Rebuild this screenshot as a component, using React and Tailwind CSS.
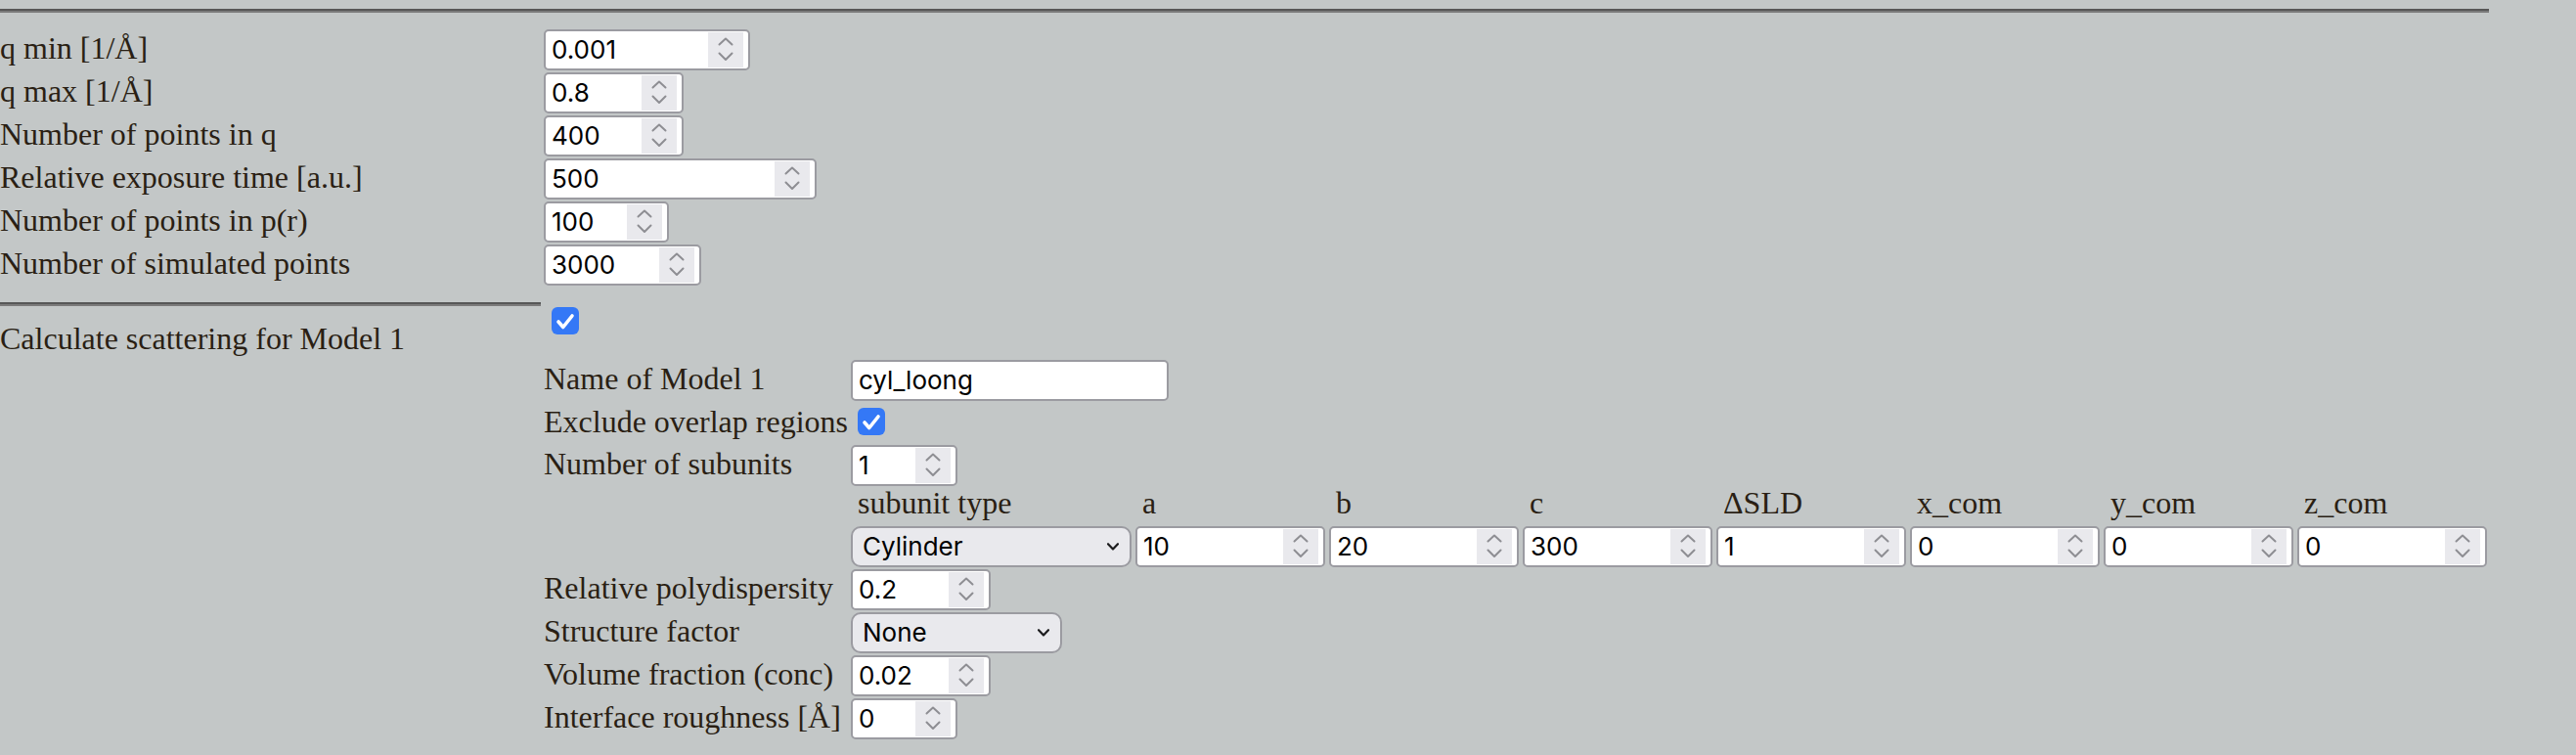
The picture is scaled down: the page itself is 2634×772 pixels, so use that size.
import React from "react";

const LABEL = "font-['Liberation_Serif',serif] text-[32px] leading-[38px] text-[#2a1f14] whitespace-nowrap";
const FIELD_TEXT = "font-['Inter',sans-serif] text-[26px] leading-none text-black";

function Spinner() {
  return (
    <div className="w-[36px] h-[36px] bg-[#e9e9ed] flex items-center justify-center shrink-0">
      <svg width="36" height="36" viewBox="0 0 36 36" fill="none">
        <polyline points="11.5,12.5 18,6.5 24.5,12.5" stroke="#8e8e93" strokeWidth="2" strokeLinecap="round" strokeLinejoin="round" />
        <polyline points="11.5,21.5 18,28 24.5,21.5" stroke="#8e8e93" strokeWidth="2" strokeLinecap="round" strokeLinejoin="round" />
      </svg>
    </div>
  );
}

function NumInput({ value, w }) {
  return (
    <div className={`flex items-center h-[42px] border-2 border-[#9b9ba1] rounded-[5px] bg-white pl-[6px] pr-[5px] ${w}`}>
      <span className={`flex-1 ${FIELD_TEXT}`}>{value}</span>
      <Spinner />
    </div>
  );
}

function Select({ value, w }) {
  return (
    <div className={`flex items-center h-[42px] border-2 border-[#9b9ba1] rounded-[10px] bg-[#e9e9ed] pl-[10px] pr-[11px] ${w}`}>
      <span className={`flex-1 ${FIELD_TEXT}`}>{value}</span>
      <svg width="12" height="8" viewBox="0 0 12 8" fill="none">
        <polyline points="1,1.2 6,6.5 11,1.2" stroke="#1c1c1e" strokeWidth="2.2" strokeLinecap="round" strokeLinejoin="round" />
      </svg>
    </div>
  );
}

function Checkbox({ className = "" }) {
  return (
    <div className={`w-[28px] h-[28px] rounded-[6px] bg-[#3478f6] flex items-center justify-center ${className}`}>
      <svg width="28" height="28" viewBox="0 0 28 28" fill="none">
        <polyline points="7,15 11.8,20.5 21,9" stroke="white" strokeWidth="3.6" strokeLinecap="round" strokeLinejoin="round" />
      </svg>
    </div>
  );
}

function Hr({ className = "" }) {
  return <div className={`h-0 border-t-2 border-b-2 border-t-[#575757] border-b-[#7a7a7a] ${className}`} />;
}

const topRows = [
  ["q min [1/Å]", "0.001", "w-[211px]"],
  ["q max [1/Å]", "0.8", "w-[143px]"],
  ["Number of points in q", "400", "w-[143px]"],
  ["Relative exposure time [a.u.]", "500", "w-[279px]"],
  ["Number of points in p(r)", "100", "w-[128px]"],
  ["Number of simulated points", "3000", "w-[161px]"],
];

const headers = ["subunit type", "a", "b", "c", "ΔSLD", "x_com", "y_com", "z_com"];
const values = ["10", "20", "300", "1", "0", "0", "0"];

export default function App() {
  return (
    <div className="min-h-screen w-full bg-[#c3c7c7] overflow-hidden">
      <Hr className="mt-[9px] w-[2545px]" />
      <div className="mt-[17px] grid grid-cols-[553px_max-content] gap-x-[3px] gap-y-[2px]">
        {topRows.map(([label, value, w]) => (
          <React.Fragment key={label}>
            <div className={LABEL}>{label}</div>
            <div className="flex">
              <NumInput value={value} w={w} />
            </div>
          </React.Fragment>
        ))}

        <div className="flex flex-col h-[72px]">
          <Hr className="mt-[15px] w-full" />
          <div className={`mt-[14px] ${LABEL}`}>Calculate scattering for Model 1</div>
        </div>
        <div className="pt-[20px] pl-[8px]">
          <Checkbox />
        </div>

        <div />
        <div className="grid grid-cols-[max-content_max-content] gap-x-[3px] gap-y-[2px]">
          <div className={LABEL}>Name of Model 1</div>
          <div className="flex">
            <div className="flex items-center h-[42px] w-[325px] border-2 border-[#9b9ba1] rounded-[5px] bg-white pl-[6px]">
              <span className={FIELD_TEXT}>cyl_loong</span>
            </div>
          </div>

          <div className={`${LABEL} h-[41px]`}>Exclude overlap regions</div>
          <div className="h-[41px] flex items-start">
            <Checkbox className="ml-[7px] mt-[5px]" />
          </div>

          <div className={LABEL}>Number of subunits</div>
          <div className="flex">
            <NumInput value="1" w="w-[109px]" />
          </div>

          <div />
          <div className="flex flex-col gap-y-[2px]">
            <div className="grid grid-cols-[287px_repeat(7,194px)] gap-x-[4px] h-[37px] items-start">
              {headers.map((h) => (
                <div key={h} className="pl-[7px] font-['Liberation_Serif',serif] text-[32px] leading-[30px] text-[#2a1f14] whitespace-nowrap">
                  {h}
                </div>
              ))}
            </div>
            <div className="grid grid-cols-[287px_repeat(7,194px)] gap-x-[4px]">
              <Select value="Cylinder" w="w-[287px]" />
              {values.map((v, i) => (
                <NumInput key={i} value={v} w="w-[194px]" />
              ))}
            </div>
          </div>

          <div className={LABEL}>Relative polydispersity</div>
          <div className="flex">
            <NumInput value="0.2" w="w-[143px]" />
          </div>

          <div className={LABEL}>Structure factor</div>
          <div className="flex">
            <Select value="None" w="w-[216px]" />
          </div>

          <div className={LABEL}>Volume fraction (conc)</div>
          <div className="flex">
            <NumInput value="0.02" w="w-[143px]" />
          </div>

          <div className={LABEL}>Interface roughness [Å]</div>
          <div className="flex">
            <NumInput value="0" w="w-[109px]" />
          </div>
        </div>
      </div>
    </div>
  );
}
